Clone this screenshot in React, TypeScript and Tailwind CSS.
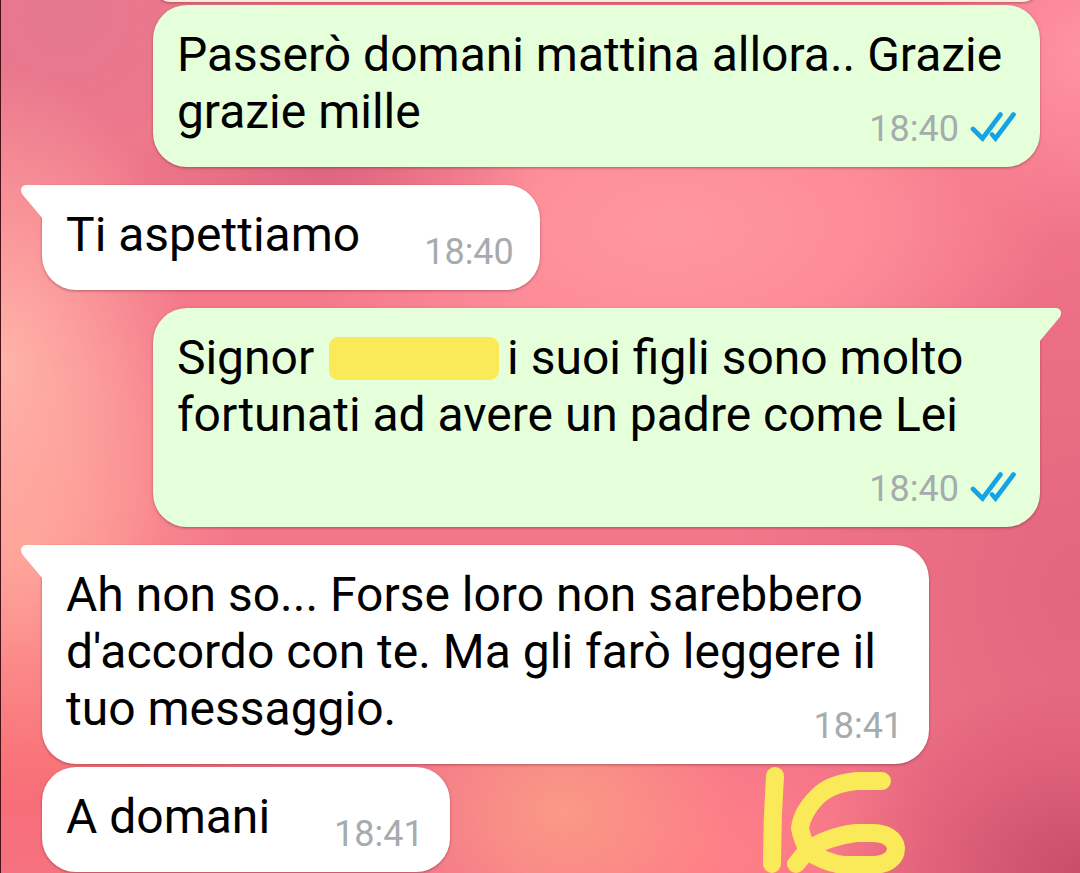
import React from "react";

/* ---------------- ICONS ---------------- */

const ReadTicks: React.FC = () => {
  return (
    <svg
      role="img"
      aria-label="Letto"
      width="46"
      height="30"
      viewBox="0 0 46 30"
      fill="none"
      stroke="#14a4e6"
      strokeWidth="4.600"
      strokeLinecap="round"
      className="mb-2 shrink-0"
    >
      <path d="M3 17 12.500 26.500 30.500 2.500" />
      <path d="M22 22.500 25.500 26.500 43.500 2.500" />
    </svg>
  );
};

const LeftTail: React.FC = () => {
  return (
    <svg
      aria-hidden="true"
      width="22"
      height="34"
      viewBox="0 0 22 34"
      className="absolute top-0 -left-[21px]"
    >
      <path d="M22 0H6C0 0-1.500 5 1.500 9.500L22 34Z" fill="#ffffff" />
    </svg>
  );
};

const RightTail: React.FC = () => {
  return (
    <svg
      aria-hidden="true"
      width="22"
      height="34"
      viewBox="0 0 22 34"
      className="absolute top-0 -right-[21px]"
    >
      <path d="M0 0H16C22 0 23.500 5 20.500 9.500L0 34Z" fill="#e5ffdb" />
    </svg>
  );
};

/* ---------------- BUBBLE ---------------- */

type BubbleProps = {
  time: string;
  sent?: boolean;
  tail?: boolean;
  children: React.ReactNode;
};

const Bubble: React.FC<BubbleProps> = ({
  time,
  sent = false,
  tail = false,
  children,
}) => {
  const side = sent
    ? "self-end bg-[#e5ffdb] pr-6"
    : "self-start bg-white pr-[26px]";
  const corner = !tail ? "" : sent ? "rounded-tr-none" : "rounded-tl-none";

  return (
    <article
      className={`relative max-w-8/9 rounded-[34px] pt-[21px] pb-[17px] pl-6 shadow-[0_1px_3px_rgba(80,20,30,0.4)] ${side} ${corner}`}
    >
      {tail && (sent ? <RightTail /> : <LeftTail />)}
      <div className="flow-root text-[48px] leading-[57px] text-black">
        {children}
        {/* L'ora sta sull'ultima riga se c'è posto, altrimenti va a capo */}
        <span className="float-right mt-[25px] ml-16 flex items-end gap-[11px]">
          <time className="text-[36px] leading-[42px] text-[#a6abad]">
            {time}
          </time>
          {sent && <ReadTicks />}
        </span>
      </div>
    </article>
  );
};

/* ---------------- PAGE ---------------- */

const App: React.FC = () => {
  return (
    <main className="flex min-h-screen flex-col overflow-hidden border-l border-[#4a1018] bg-[#f4778a] bg-[radial-gradient(18%_34%_at_0%_42%,#ffb3a8_0%,transparent_100%),radial-gradient(20%_30%_at_2%_62%,#ff9f93_0%,transparent_100%),radial-gradient(24%_26%_at_6%_2%,#e4788e_0%,transparent_100%),radial-gradient(20%_8%_at_30%_20%,#dd6680_0%,transparent_100%),radial-gradient(36%_24%_at_62%_26%,#ff979e_0%,#ff929ccc_50%,transparent_100%),radial-gradient(14%_22%_at_100%_6%,#ff93a2_0%,transparent_100%),radial-gradient(24%_22%_at_100%_100%,#c94c69_0%,#d8597499_60%,transparent_100%),radial-gradient(16%_16%_at_52%_93%,#fa9a85_0%,transparent_100%),radial-gradient(24%_16%_at_66%_98%,#ff7f87_0%,transparent_100%),radial-gradient(30%_24%_at_0%_86%,#f86b72_0%,transparent_100%),radial-gradient(34%_56%_at_100%_68%,#e2667e_0%,transparent_100%)] pr-10 pl-[41px] font-[Roboto,sans-serif]">
      {/* Fondo del messaggio precedente */}
      <div className="-mt-[34px] mb-[3px] h-9 w-8/9 shrink-0 self-end rounded-[34px] bg-[#fdebd9] shadow-[0_1px_3px_rgba(80,20,30,0.4)]" />

      <div className="flex flex-col gap-[18px]">
        <Bubble sent time="18:40">
          Passerò domani mattina allora.. Grazie grazie mille
        </Bubble>

        <Bubble tail time="18:40">
          Ti aspettiamo
        </Bubble>

        <Bubble sent tail time="18:40">
          Signor{" "}
          <span className="mr-2 ml-[3px] inline-block h-[43px] w-[170px] rounded-[9px] bg-[#faea59] align-[-6px]" />
          i suoi figli sono molto fortunati ad avere un padre come Lei
        </Bubble>

        <Bubble tail time="18:41">
          Ah non so... Forse loro non sarebbero d'accordo con te. Ma gli farò
          leggere il tuo messaggio.
        </Bubble>
      </div>

      <div className="mt-[3px] flex items-start justify-between">
        <Bubble time="18:41">A domani</Bubble>

        {/* Numero scritto a mano */}
        <svg
          role="img"
          aria-label="16"
          width="144"
          height="105"
          viewBox="0 0 144 105"
          fill="none"
          stroke="#faea59"
          strokeWidth="18"
          strokeLinecap="round"
          strokeLinejoin="round"
          className="mr-[134px] shrink-0 overflow-visible"
        >
          <path d="M13 9 C11 38 10 65 10 97" />
          <path d="M120 14 H95 C77 16 65 20 55 30 C45 40 39 52 38 61 C40 72 43 78 47 85 C60 93 70 97 82 98 H112 C126 97 134 91 134 81 C133 72 124 66 110 66 H94 C76 68 56 75 45 84 C41 88 38 93 34 97" />
        </svg>
      </div>
    </main>
  );
};

export default App;
